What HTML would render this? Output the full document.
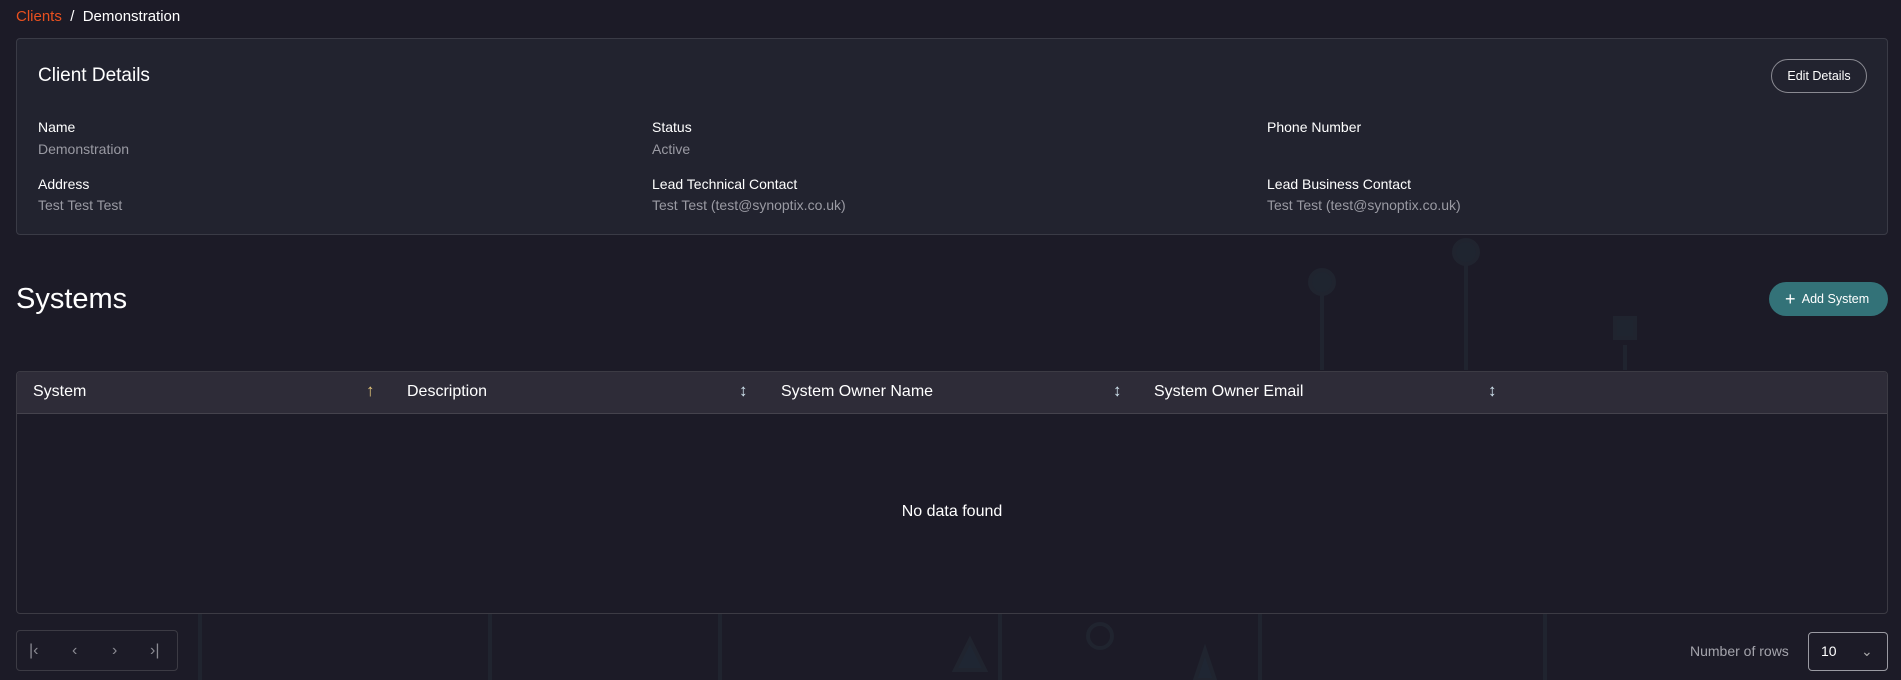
<!DOCTYPE html>
<html><head><meta charset="utf-8"><style>
*{box-sizing:border-box;margin:0;padding:0}
body{width:1901px;height:680px;background:#1c1b27;font-family:"Liberation Sans",sans-serif;color:#fff;position:relative;overflow:hidden}
.a{position:absolute;white-space:nowrap}
.lbl{font-size:14px;color:#fff}
.val{font-size:14px;color:#9a9aa3}
.card{position:absolute;left:16px;top:38px;width:1872px;height:197px;background:#22232f;border:1px solid #3a3b46;border-radius:4px}
.th{font-size:16px;color:#fff}
.srt{font-size:17px;color:#d9d6c5}
</style></head><body>
<svg class="a" style="left:0;top:0" width="1901" height="680">
<g stroke="#20242f" stroke-width="4" fill="none">
<line x1="1322" y1="290" x2="1322" y2="370"/><circle cx="1322" cy="282" r="12" fill="#1f2530"/>
<line x1="1466" y1="265" x2="1466" y2="370"/><circle cx="1466" cy="252" r="12" fill="#1f2530"/>
<line x1="1625" y1="345" x2="1625" y2="370"/><rect x="1615" y="318" width="20" height="20" fill="#1f2530"/>
<line x1="200" y1="613" x2="200" y2="680"/><line x1="490" y1="613" x2="490" y2="680"/>
<line x1="1000" y1="613" x2="1000" y2="680"/><circle cx="1100" cy="636" r="12"/>
<line x1="1545" y1="613" x2="1545" y2="680"/><line x1="1260" y1="613" x2="1260" y2="680"/>
<line x1="720" y1="613" x2="720" y2="680"/><polygon points="970,640 955,670 985,670" fill="#1f2633"/>
<polygon points="1205,650 1195,680 1215,680" fill="#1f2633"/>
</g></svg>
<div class="a" style="left:16px;top:8px;font-size:15px"><span style="color:#e8501f">Clients</span>&nbsp; / &nbsp;Demonstration</div>
<div class="card"></div>
<div class="a" style="left:38px;top:65px;font-size:19px">Client Details</div>
<div class="a" style="left:1771px;top:59px;width:96px;height:34px;border:1px solid #8a8a92;border-radius:17px;font-size:12.5px;line-height:32px;text-align:center">Edit Details</div>
<div class="a lbl" style="left:38px;top:119px">Name</div><div class="a val" style="left:38px;top:141px">Demonstration</div>
<div class="a lbl" style="left:652px;top:119px">Status</div><div class="a val" style="left:652px;top:141px">Active</div>
<div class="a lbl" style="left:1267px;top:119px">Phone Number</div>
<div class="a lbl" style="left:38px;top:176px">Address</div><div class="a val" style="left:38px;top:197px">Test Test Test</div>
<div class="a lbl" style="left:652px;top:176px">Lead Technical Contact</div><div class="a val" style="left:652px;top:197px">Test Test (test@synoptix.co.uk)</div>
<div class="a lbl" style="left:1267px;top:176px">Lead Business Contact</div><div class="a val" style="left:1267px;top:197px">Test Test (test@synoptix.co.uk)</div>
<div class="a" style="left:16px;top:283px;font-size:29px">Systems</div>
<div class="a" style="left:1769px;top:282px;width:119px;height:34px;background:#337278;border-radius:17px;font-size:12.5px;line-height:34px;padding-left:16px"><span style="font-size:18px;vertical-align:-2px">+</span>&nbsp; Add System</div>
<div class="a" style="left:16px;top:371px;width:1872px;height:243px;border:1px solid #3c3b44;border-radius:4px;background:#1c1b27;overflow:hidden">
<div style="height:42px;background:#2e2c38;border-bottom:1px solid #45434d"></div></div>
<div class="a th" style="left:33px;top:383px">System</div><div class="a srt" style="left:366px;top:381px;color:#e8c87a">↑</div>
<div class="a th" style="left:407px;top:383px">Description</div><div class="a srt" style="left:739px;top:381px;color:#cfe3ee">↕</div>
<div class="a th" style="left:781px;top:383px">System Owner Name</div><div class="a srt" style="left:1113px;top:381px;color:#cfe3ee">↕</div>
<div class="a th" style="left:1154px;top:383px">System Owner Email</div><div class="a srt" style="left:1488px;top:381px;color:#cfe3ee">↕</div>
<div class="a" style="left:0;width:1904px;top:503px;text-align:center;font-size:16px">No data found</div>
<div class="a" style="left:16px;top:630px;width:162px;height:41px;border:1px solid #3c3b44;border-radius:4px;color:#8a8a92;font-size:16px;line-height:39px">
<span class="a" style="left:12px">|‹</span><span class="a" style="left:55px">‹</span><span class="a" style="left:95px">›</span><span class="a" style="left:133px">›|</span></div>
<div class="a" style="left:1690px;top:643px;font-size:14px;color:#a4a4ac">Number of rows</div>
<div class="a" style="left:1808px;top:632px;width:80px;height:39px;border:1px solid #9a9aa2;border-radius:4px;font-size:14px;line-height:37px;padding-left:12px">10<span class="a" style="left:52px;top:0;color:#aaa">⌄</span></div>
</body></html>
